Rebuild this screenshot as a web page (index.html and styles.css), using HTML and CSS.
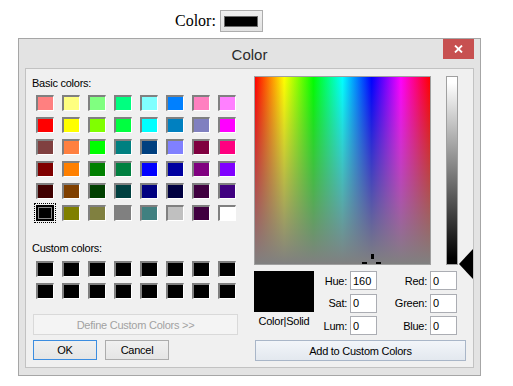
FILE: index.html
```html
<!DOCTYPE html>
<html lang="en">

<head>
    <meta charset="UTF-8">
    <meta name="viewport" content="width=device-width, initial-scale=1.0">
    <title>Color</title>
    <link rel="stylesheet" href="styles.css">
</head>

<body>

    <div class="field">
        <label class="field-label">Color:</label>
        <button class="color-btn"><span class="color-well"></span></button>
    </div>

    <div class="dialog">
        <div class="titlebar">
            <span class="title">Color</span>
            <button class="close">
                <svg width="9" height="8" viewBox="0 0 9 8">
                    <path d="M1 0.5 L8 7.5 M8 0.5 L1 7.5" stroke="#fff" stroke-width="1.8" fill="none"/>
                </svg>
            </button>
        </div>

        <div class="client">
            <div class="left">
                <div class="label">Basic colors:</div>
                <div class="swatches basic">
                    <span class="sw" style="background:#ff8080"></span>
                    <span class="sw" style="background:#ffff80"></span>
                    <span class="sw" style="background:#80ff80"></span>
                    <span class="sw" style="background:#00ff80"></span>
                    <span class="sw" style="background:#80ffff"></span>
                    <span class="sw" style="background:#0080ff"></span>
                    <span class="sw" style="background:#ff80c0"></span>
                    <span class="sw" style="background:#ff80ff"></span>

                    <span class="sw" style="background:#ff0000"></span>
                    <span class="sw" style="background:#ffff00"></span>
                    <span class="sw" style="background:#80ff00"></span>
                    <span class="sw" style="background:#00ff40"></span>
                    <span class="sw" style="background:#00ffff"></span>
                    <span class="sw" style="background:#0080c0"></span>
                    <span class="sw" style="background:#8080c0"></span>
                    <span class="sw" style="background:#ff00ff"></span>

                    <span class="sw" style="background:#804040"></span>
                    <span class="sw" style="background:#ff8040"></span>
                    <span class="sw" style="background:#00ff00"></span>
                    <span class="sw" style="background:#008080"></span>
                    <span class="sw" style="background:#004080"></span>
                    <span class="sw" style="background:#8080ff"></span>
                    <span class="sw" style="background:#800040"></span>
                    <span class="sw" style="background:#ff0080"></span>

                    <span class="sw" style="background:#800000"></span>
                    <span class="sw" style="background:#ff8000"></span>
                    <span class="sw" style="background:#008000"></span>
                    <span class="sw" style="background:#008040"></span>
                    <span class="sw" style="background:#0000ff"></span>
                    <span class="sw" style="background:#0000a0"></span>
                    <span class="sw" style="background:#800080"></span>
                    <span class="sw" style="background:#8000ff"></span>

                    <span class="sw" style="background:#400000"></span>
                    <span class="sw" style="background:#804000"></span>
                    <span class="sw" style="background:#004000"></span>
                    <span class="sw" style="background:#004040"></span>
                    <span class="sw" style="background:#000080"></span>
                    <span class="sw" style="background:#000040"></span>
                    <span class="sw" style="background:#400040"></span>
                    <span class="sw" style="background:#400080"></span>

                    <span class="sw selected" style="background:#000000"></span>
                    <span class="sw" style="background:#808000"></span>
                    <span class="sw" style="background:#808040"></span>
                    <span class="sw" style="background:#808080"></span>
                    <span class="sw" style="background:#408080"></span>
                    <span class="sw" style="background:#c0c0c0"></span>
                    <span class="sw" style="background:#400040"></span>
                    <span class="sw" style="background:#ffffff"></span>
                </div>

                <div class="label custom-label">Custom colors:</div>
                <div class="swatches custom">
                    <span class="sw empty"></span><span class="sw empty"></span>
                    <span class="sw empty"></span><span class="sw empty"></span>
                    <span class="sw empty"></span><span class="sw empty"></span>
                    <span class="sw empty"></span><span class="sw empty"></span>
                    <span class="sw empty"></span><span class="sw empty"></span>
                    <span class="sw empty"></span><span class="sw empty"></span>
                    <span class="sw empty"></span><span class="sw empty"></span>
                    <span class="sw empty"></span><span class="sw empty"></span>
                </div>

                <button class="btn define" disabled>Define Custom Colors &gt;&gt;</button>
                <div class="actions">
                    <button class="btn default">OK</button>
                    <button class="btn">Cancel</button>
                </div>
            </div>

            <div class="right">
                <div class="picker">
                    <div class="spectrum">
                        <svg class="cross" width="21" height="21" viewBox="0 0 21 21">
                            <rect x="9" y="0" width="3" height="5" fill="#000"/>
                            <rect x="0" y="8" width="5" height="3" fill="#000"/>
                            <rect x="14" y="8" width="5" height="3" fill="#000"/>
                            <rect x="9" y="13" width="3" height="5" fill="#000"/>
                        </svg>
                    </div>
                    <div class="lum">
                        <svg class="arrow" width="14" height="30" viewBox="0 0 14 30">
                            <polygon points="0,15 14,0 14,30" fill="#000"/>
                        </svg>
                    </div>
                </div>

                <div class="lower">
                    <div class="preview-col">
                        <div class="preview"></div>
                        <div class="preview-label">Color|Solid</div>
                    </div>
                    <div class="fields">
                        <label>Hue:</label><input type="text" value="160">
                        <label>Red:</label><input type="text" value="0">
                        <label>Sat:</label><input type="text" value="0">
                        <label>Green:</label><input type="text" value="0">
                        <label>Lum:</label><input type="text" value="0">
                        <label>Blue:</label><input type="text" value="0">
                    </div>
                </div>

                <button class="btn add">Add to Custom Colors</button>
            </div>
        </div>
    </div>

</body>

</html>
```

FILE: styles.css
```css
body {
    margin: 0;
    background: #fff;
    font-family: "Liberation Sans", Arial, sans-serif;
}

/* page field above the dialog */
.field {
    display: flex;
    align-items: center;
    height: 22px;
    padding: 10px 0 0 175px;
}

.field-label {
    font-family: "Liberation Serif", "Times New Roman", serif;
    font-size: 16px;
    margin-right: 4px;
}

.color-btn {
    display: flex;
    align-items: center;
    justify-content: center;
    width: 43px;
    height: 22px;
    padding: 0;
    border: 1px solid #adadad;
    background: linear-gradient(#f0f0f0, #e2e2e2);
}

.color-well {
    display: block;
    width: 34px;
    height: 11px;
    box-sizing: border-box;
    border: 1px solid #6a6a6a;
    background: #000;
}

/* dialog window */
.dialog {
    width: 449px;
    margin: 6px 0 0 18px;
    padding: 0 6px 7px;
    border: 1px solid #a6a6a6;
    background: #e3e3e3;
}

.titlebar {
    position: relative;
    display: flex;
    align-items: center;
    justify-content: center;
    height: 29px;
}

.title {
    font-size: 15px;
    color: #2b2b2b;
    padding-top: 1px;
}

.close {
    position: absolute;
    top: 0;
    right: 0;
    display: flex;
    align-items: center;
    justify-content: center;
    width: 31px;
    height: 20px;
    padding: 0;
    border: 0;
    background: #c75050;
}

.client {
    display: flex;
    height: 298px;
    border: 1px solid #c2c2c2;
    background: #f0f0f0;
    font-size: 11px;
    letter-spacing: -0.25px;
    color: #000;
}

/* left half */
.left {
    width: 221px;
    padding: 7px 0 0 7px;
}

.label {
    height: 14px;
    line-height: 14px;
    margin-left: -1px;
}

.swatches {
    display: grid;
    grid-template-columns: repeat(8, 18px);
    grid-auto-rows: 16px;
    column-gap: 8px;
    row-gap: 6px;
    margin-left: 3px;
}

.basic {
    margin-top: 5px;
}

.custom-label {
    margin-top: 20px;
}

.custom {
    margin-top: 6px;
}

.sw {
    display: block;
    box-sizing: border-box;
    border-style: solid;
    border-width: 2px 1px 1px 2px;
    border-color: #808080 #fff #fff #808080;
}

.sw.empty {
    background: #000;
}

.sw.selected {
    border: 2px solid #000;
    box-shadow: inset 0 0 0 1px #8a8a8a;
    outline: 1px dotted #000;
    outline-offset: 1px;
}

.btn {
    display: block;
    box-sizing: border-box;
    height: 20px;
    padding: 0;
    border: 1px solid #acacac;
    background: linear-gradient(#f0f0f0, #e5e5e5);
    font-family: "Liberation Sans", Arial, sans-serif;
    font-size: 11px;
    letter-spacing: -0.25px;
    color: #000;
}

.define {
    width: 205px;
    height: 21px;
    margin-top: 15px;
    border-color: #d9d9d9;
    background: #f4f4f4;
    color: #a2a2a2;
}

.actions {
    display: flex;
    gap: 8px;
    margin-top: 5px;
}

.actions .btn {
    width: 64px;
}

.btn.default {
    border-color: #3c8de0;
}

/* right half */
.right {
    width: 219px;
    padding-top: 7px;
}

.picker {
    display: flex;
}

.spectrum {
    position: relative;
    overflow: hidden;
    width: 175px;
    height: 187px;
    border: 1px solid #a0a0a0;
    background:
        linear-gradient(to bottom, rgba(128, 128, 128, 0), #808080),
        linear-gradient(to right, #f00, #ff0 16.67%, #0f0 33.33%, #0ff 50%, #00f 66.67%, #f0f 83.33%, #f00);
}

.cross {
    position: absolute;
    left: 107px;
    top: 177px;
}

.lum {
    position: relative;
    width: 10px;
    height: 187px;
    margin-left: 15px;
    border: 1px solid #a0a0a0;
    background: linear-gradient(#fff 3%, #000 97%);
}

.arrow {
    position: absolute;
    left: 12px;
    top: 172px;
}

.lower {
    display: flex;
    margin-top: 6px;
}

.preview-col {
    width: 60px;
}

.preview {
    height: 41px;
    background: #000;
}

.preview-label {
    margin-top: 2px;
    text-align: center;
    line-height: 14px;
}

.fields {
    display: grid;
    grid-template-columns: 33px 27px 47px 27px;
    grid-auto-rows: 19px;
    column-gap: 3px;
    row-gap: 3.5px;
}

.fields label {
    align-self: center;
    text-align: right;
}

.fields input {
    box-sizing: border-box;
    width: 27px;
    height: 19px;
    padding: 0 2px;
    border: 1px solid #abadb3;
    background: #fff;
    font-family: "Liberation Sans", Arial, sans-serif;
    font-size: 11px;
    color: #000;
}

.add {
    width: 211px;
    height: 21px;
    margin: 5px 0 0 1px;
    border-color: #a9b6c8;
    background: linear-gradient(#f2f5f9, #e3e8ef);
}
```
